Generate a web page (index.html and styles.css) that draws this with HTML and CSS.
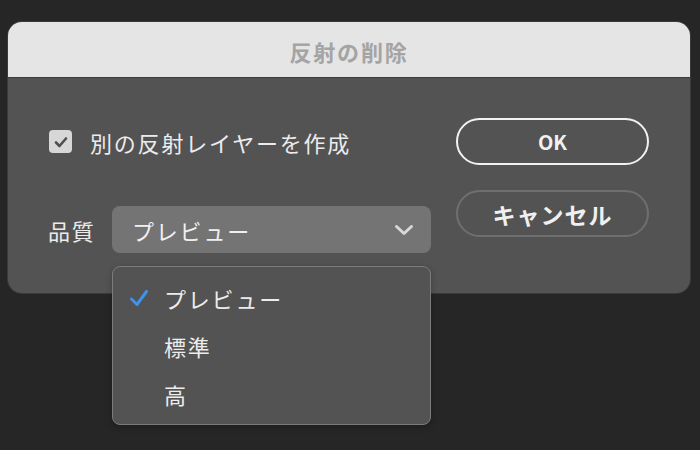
FILE: index.html
```html
<!DOCTYPE html>
<html lang="ja">
<head>
<meta charset="utf-8">
<title>反射の削除</title>
<link rel="stylesheet" href="styles.css">
</head>
<body>
<div class="dialog">
  <div class="titlebar">反射の削除</div>
  <div class="content">
    <div class="fields">
      <label class="row check-row">
        <span class="checkbox">
          <svg width="16" height="16" viewBox="0 0 16 16"><path d="M3 8.5 L6.5 12 L13 4.5" fill="none" stroke="#4f4f4f" stroke-width="2.6" stroke-linecap="round" stroke-linejoin="round"/></svg>
        </span>
        <span class="label">別の反射レイヤーを作成</span>
      </label>
      <div class="row select-row">
        <span class="label quality">品質</span>
        <div class="select-wrap">
          <div class="select">
            <span class="label">プレビュー</span>
            <svg class="chevron" width="20" height="12" viewBox="0 0 20 12"><path d="M2.5 2.5 L10 9.5 L17.5 2.5" fill="none" stroke="#d8d8d8" stroke-width="3" stroke-linecap="round" stroke-linejoin="round"/></svg>
          </div>
          <ul class="menu">
            <li class="item selected">
              <svg class="tick" width="20" height="18" viewBox="0 0 20 18"><path d="M2.5 10 L8 15.5 L17.5 2.5" fill="none" stroke="#3f92ea" stroke-width="3" stroke-linecap="round" stroke-linejoin="round"/></svg>
              <span class="label">プレビュー</span>
            </li>
            <li class="item"><span class="tick-space"></span><span class="label">標準</span></li>
            <li class="item"><span class="tick-space"></span><span class="label">高</span></li>
          </ul>
        </div>
      </div>
    </div>
    <div class="buttons">
      <button class="btn primary">OK</button>
      <button class="btn secondary">キャンセル</button>
    </div>
  </div>
</div>
</body>
</html>
```

FILE: styles.css
```css
html, body {
  margin: 0;
  padding: 0;
  background: #262626;
  width: 700px;
  height: 450px;
  overflow: hidden;
  font-family: "Noto Sans CJK JP", "Noto Sans", sans-serif;
}

.dialog {
  margin: 22px 0 0 8px;
  width: 682px;
  height: 271px;
  border-radius: 14px;
  background: #535353;
  overflow: visible;
  box-shadow: 0 0 0 1px #3a3a3a;
}

.titlebar {
  height: 56px;
  background: #e5e5e5;
  border-radius: 14px 14px 0 0;
  border-bottom: 1px solid #3c3c3c;
  box-sizing: border-box;
  display: flex;
  align-items: center;
  justify-content: center;
  font-size: 22px;
  font-weight: 700;
  letter-spacing: 1.8px;
  color: #a4a4a4;
  padding: 2px 0 0 0;
}

.content {
  display: flex;
  justify-content: space-between;
  padding: 40px 41px 0 40px;
}

.fields {
  display: flex;
  flex-direction: column;
  gap: 41px;
}

.row {
  display: flex;
  align-items: center;
  height: 47px;
}

.label {
  font-size: 22px;
  letter-spacing: 1.8px;
  color: #ececec;
  line-height: 1;
}

.checkbox {
  width: 23px;
  height: 23px;
  border-radius: 4px;
  background: #d7d7d7;
  display: flex;
  align-items: center;
  justify-content: center;
  margin-left: 1px;
  margin-right: 18px;
}

.quality {
  flex: none;
  width: 64px;
}

.select-wrap {
  position: relative;
}

.select {
  width: 319px;
  height: 47px;
  box-sizing: border-box;
  border-radius: 8px;
  background: #747474;
  display: flex;
  align-items: center;
  justify-content: space-between;
  padding: 0 17px 0 20px;
}

.select .label {
  color: #f0f0f0;
}

.menu {
  position: absolute;
  top: 60px;
  left: 0;
  width: 319px;
  height: 159px;
  box-sizing: border-box;
  margin: 0;
  padding: 7px 0;
  list-style: none;
  background: #535353;
  border: 1.5px solid #7c7c7c;
  border-radius: 8px;
  box-shadow: 0 2px 6px rgba(0, 0, 0, 0.25);
}

.item {
  height: 48px;
  display: flex;
  align-items: center;
  padding-left: 16px;
}

.tick, .tick-space {
  width: 20px;
  height: 18px;
  margin-right: 15px;
  flex: none;
}

.buttons {
  display: flex;
  flex-direction: column;
  gap: 25px;
}

.btn {
  width: 193px;
  height: 47px;
  box-sizing: border-box;
  border-radius: 24px;
  background: transparent;
  font-family: "Noto Sans CJK JP", "Noto Sans", sans-serif;
  font-weight: 700;
  color: #f0f0f0;
  padding: 0;
  display: flex;
  align-items: center;
  justify-content: center;
}

.primary {
  border: 2px solid #f2f2f2;
  font-size: 20px;
}

.secondary {
  border: 2px solid #6f6f6f;
  font-size: 23px;
  letter-spacing: 1px;
}
```
